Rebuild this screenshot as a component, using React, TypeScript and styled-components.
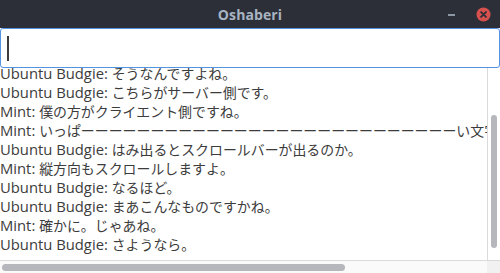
import React from "react";
import styled, { createGlobalStyle } from "styled-components";

/* ─── Global ─── */

const GlobalStyle = createGlobalStyle`
  html, body {
    margin: 0;
    padding: 0;
    background: #fff;
    overflow: hidden;
  }
  * {
    box-sizing: border-box;
  }
`;

/* ─── Window chrome ─── */

const Window = styled.div`
  width: 500px;
  height: 273px;
  display: flex;
  flex-direction: column;
  background: #fff;
  font-family: "Open Sans", "Noto Sans", "Noto Sans CJK JP", sans-serif;
`;

const TitleBar = styled.header`
  height: 28px;
  flex: none;
  background: #2c2f38;
  display: grid;
  grid-template-columns: 1fr auto 1fr;
  align-items: center;
`;

const Title = styled.div`
  grid-column: 2;
  font-family: "Open Sans", "Noto Sans", sans-serif;
  font-weight: 700;
  font-size: 14px;
  color: #a9b4c3;
  letter-spacing: 0.1px;
`;

const Controls = styled.div`
  grid-column: 3;
  justify-self: end;
  display: flex;
  align-items: center;
  gap: 21px;
  padding-right: 9px;
`;

const MinimizeBtn = styled.div`
  width: 7px;
  height: 2px;
  background: #8d96a3;
  margin-top: 1px;
`;

const CloseBtn = styled.div`
  width: 15px;
  height: 15px;
  display: flex;
  svg {
    display: block;
  }
`;

/* ─── Entry ─── */

const Entry = styled.div`
  height: 40px;
  flex: none;
  border: 1px solid #5294e2;
  border-radius: 3px;
  display: flex;
  align-items: center;
  padding-left: 6px;
`;

const Caret = styled.span`
  width: 2px;
  height: 25px;
  background: #3c3c3c;
`;

/* ─── Scrolled text view ─── */

const Scroller = styled.div`
  flex: 1;
  display: grid;
  grid-template-columns: 487px 13px;
  grid-template-rows: 192px 13px;
`;

const TextView = styled.div`
  overflow: hidden;
  display: flex;
  flex-direction: column;
  justify-content: flex-end;
  padding-bottom: 6px;
  white-space: nowrap;
  color: #3c3c3c;
`;

const Line = styled.div`
  height: 19px;
  line-height: 19px;
`;

const Speaker = styled.span`
  font-family: "Open Sans", "Noto Sans", sans-serif;
  font-size: 14.8px;
`;

const Message = styled.span`
  font-family: "Noto Sans CJK JP", sans-serif;
  font-size: 13.92px;
`;

const VTrack = styled.div`
  border-left: 1px solid #dadada;
  background: #fff;
  display: flex;
  flex-direction: column;
  justify-content: flex-end;
  padding: 0 2px 12px 3px;
`;

const HTrack = styled.div`
  border-top: 1px solid #dadada;
  background: #fafafa;
  padding: 3px 0 0 2px;
`;

const Thumb = styled.div<{ $w: number; $h: number }>`
  width: ${(p) => p.$w}px;
  height: ${(p) => p.$h}px;
  border-radius: 4px;
  background: #b6b7bc;
`;

const Corner = styled.div`
  border-top: 1px solid #dadada;
  background: #f1f1f1;
`;

/* ─── Data ─── */

const log: [string, string][] = [
  ["Mint", "こんにちは。"],
  ["Ubuntu Budgie", "こんにちは。"],
  ["Mint", "これはチャットですか？"],
  ["Ubuntu Budgie", "そうなんですよね。"],
  ["Ubuntu Budgie", "こちらがサーバー側です。"],
  ["Mint", "僕の方がクライエント側ですね。"],
  ["Mint", "いっぱ" + "ー".repeat(27) + "い文字を書くとどうなるかな？"],
  ["Ubuntu Budgie", "はみ出るとスクロールバーが出るのか。"],
  ["Mint", "縦方向もスクロールしますよ。"],
  ["Ubuntu Budgie", "なるほど。"],
  ["Ubuntu Budgie", "まあこんなものですかね。"],
  ["Mint", "確かに。じゃあね。"],
  ["Ubuntu Budgie", "さようなら。"],
];

/* ─── App ─── */

export default function App() {
  return (
    <>
      <GlobalStyle />
      <Window>
        <TitleBar>
          <Title>Oshaberi</Title>
          <Controls>
            <MinimizeBtn />
            <CloseBtn>
              <svg width="15" height="15" viewBox="0 0 16 16">
                <circle cx="8" cy="8" r="7.5" fill="#d6514d" />
                <path d="M5.4 5.4 L10.6 10.6 M10.6 5.4 L5.4 10.6" stroke="#2c2f38" strokeWidth="2" strokeLinecap="round" />
              </svg>
            </CloseBtn>
          </Controls>
        </TitleBar>

        <Entry>
          <Caret />
        </Entry>

        <Scroller>
          <TextView>
            {log.map(([who, text], i) => (
              <Line key={i}>
                <Speaker>{who}: </Speaker>
                <Message>{text}</Message>
              </Line>
            ))}
          </TextView>
          <VTrack>
            <Thumb $w={6} $h={133} />
          </VTrack>
          <HTrack>
            <Thumb $w={343} $h={7} />
          </HTrack>
          <Corner />
        </Scroller>
      </Window>
    </>
  );
}
